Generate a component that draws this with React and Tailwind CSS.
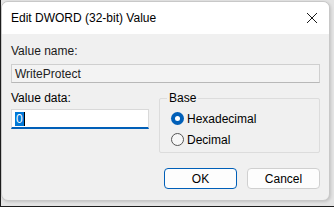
import React from 'react';

function Radio({ checked, label }) {
  return (
    <div className="flex items-center gap-[3px] h-[21px]">
      {checked ? (
        <span className="w-[13px] h-[13px] rounded-full bg-[#005fb8] flex items-center justify-center">
          <span className="w-[5px] h-[5px] rounded-full bg-white" />
        </span>
      ) : (
        <span className="w-[13px] h-[13px] rounded-full border border-[#555] bg-[#f7f7f7]" />
      )}
      <span>{label}</span>
    </div>
  );
}

export default function App() {
  return (
    <div
      className="w-[334px] h-[207px] bg-[#e4e4e4] border-l border-b border-[#1c1c1c] text-[12px] text-black overflow-hidden"
      style={{ fontFamily: '"Liberation Sans", Arial, sans-serif' }}
    >
      <div className="mt-[1px] w-[329px] h-[200px] rounded-[7px] border border-[#c8c8c8] bg-[#f0f0f0] overflow-hidden flex flex-col shadow-[1px_1px_3px_rgba(0,0,0,0.15)]">
        <div className="h-[32px] shrink-0 bg-white flex items-center justify-between pl-[9px] pr-[10px]">
          <span className="text-[12px]">Edit DWORD (32-bit) Value</span>
          <svg width="12" height="12" viewBox="0 0 12 12" className="mr-[1px]">
            <path d="M1 1L11 11M11 1L1 11" stroke="#1a1a1a" strokeWidth="1" />
          </svg>
        </div>
        <div className="flex flex-col px-[9px] pt-[10px]">
          <div className="leading-[14px] text-[#1a1a1a]">Value name:</div>
          <div className="mt-[6px] h-[19px] border border-[#cfcfcf] border-b-[#b8b8b8] bg-[#f3f3f3] flex items-center pl-[3px] text-[#222]">
            WriteProtect
          </div>
          <div className="flex mt-[8px] gap-[10px]">
            <div className="flex flex-col w-[138px]">
              <div className="leading-[14px]">Value data:</div>
              <div className="mt-[4px] h-[20px] bg-white border border-[#d9d9d9] border-b-2 border-b-[#005fb8] flex items-center pl-[3px]">
                <span className="bg-[#0078d7] text-white px-[1px] leading-[14px]">0</span>
                <span className="w-[1px] h-[14px] bg-black" />
              </div>
            </div>
            <div className="flex-1 flex flex-col">
              <div className="mt-[7px] relative border border-[#dcdcdc] rounded-[2px] h-[55px] pl-[11px] pt-[9px]">
                <span className="absolute -top-[8px] left-[7px] bg-[#f0f0f0] px-[2px] leading-[14px]">Base</span>
                <Radio checked label="Hexadecimal" />
                <Radio label="Decimal" />
              </div>
              <div className="flex gap-[10px] mt-[15px] ml-[5px]">
                <button className="w-[73px] h-[21px] rounded-[4px] border border-[#005fb8] bg-[#fdfdfd] flex items-center justify-center">
                  OK
                </button>
                <button className="w-[73px] h-[21px] rounded-[4px] border border-[#d0d0d0] bg-[#fdfdfd] flex items-center justify-center">
                  Cancel
                </button>
              </div>
            </div>
          </div>
        </div>
      </div>
    </div>
  );
}
